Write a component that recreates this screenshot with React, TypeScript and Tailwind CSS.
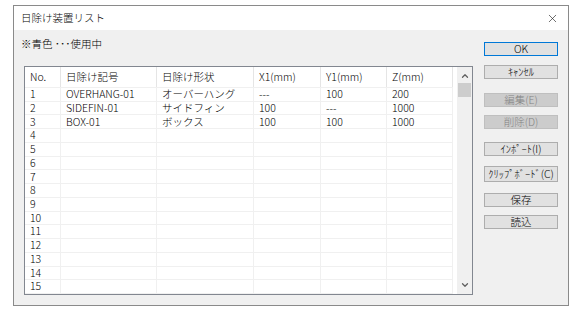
import { X, ChevronUp, ChevronDown } from 'lucide-react'

const cols = [
  { key: 'no', label: 'No.', w: 'w-[36px]' },
  { key: 'code', label: '日除け記号', w: 'w-[96px]' },
  { key: 'shape', label: '日除け形状', w: 'w-[97px]' },
  { key: 'x1', label: 'X1(mm)', w: 'w-[67px]' },
  { key: 'y1', label: 'Y1(mm)', w: 'w-[66px]' },
  { key: 'z', label: 'Z(mm)', w: 'w-[66px]' },
]

const data: Record<number, string[]> = {
  1: ['OVERHANG-01', 'オーバーハング', '---', '100', '200'],
  2: ['SIDEFIN-01', 'サイドフィン', '100', '---', '1000'],
  3: ['BOX-01', 'ボックス', '100', '100', '1000'],
}

function Btn({ label, disabled, primary, className = '' }: { label: string; disabled?: boolean; primary?: boolean; className?: string }) {
  return (
    <div
      className={`w-[74px] h-[14px] flex items-center justify-center text-[10.5px] leading-none whitespace-nowrap font-light border ${
        disabled
          ? 'bg-[#cccccc] border-[#bfbfbf] text-[#838383]'
          : primary
          ? 'bg-[#e1e1e1] border-[#0078d7] text-black'
          : 'bg-[#e1e1e1] border-[#adadad] text-black'
      } ${className}`}
    >
      {label}
    </div>
  )
}

export default function App() {
  const rows = Array.from({ length: 15 }, (_, i) => i + 1)

  return (
    <div className="w-[582px] h-[316px] bg-white pt-[5px] pl-[13px] font-light" style={{ fontFamily: '"Noto Sans CJK JP", "Noto Sans", sans-serif' }}>
      <div className="w-[556px] h-[301px] border border-[#8a8a8a] flex flex-col">
        {/* title bar */}
        <div className="h-[24px] bg-white flex items-center justify-between pl-[7px] pr-[9px] shrink-0">
          <span className="text-[10.5px] text-black">日除け装置リスト</span>
          <X className="w-[13px] h-[13px] text-[#222]" strokeWidth={1.2} />
        </div>

        {/* body */}
        <div className="flex-1 bg-[#f0f0f0] flex">
          <div className="flex flex-col">
            <div className="h-[14px] mt-[7px] pl-[7px] text-[10.5px] leading-[14px] text-black">※青色 ･･･使用中</div>
            <div className="ml-[10px] mt-[15px] w-[449px] h-[229px] border border-[#828790] bg-white flex overflow-hidden">
              <div className="flex flex-col w-[428px]">
                <div className="flex h-[21px] shrink-0 border-b border-[#f0f0f0]">
                  {cols.map((c) => (
                    <div key={c.key} className={`${c.w} border-r border-[#e5e5e5] pl-[5px] flex items-center text-[10.5px] text-black`}>
                      {c.label}
                    </div>
                  ))}
                </div>
                <div className="grid grid-rows-[repeat(15,minmax(0,1fr))] h-[206px]">
                  {rows.map((r) => {
                    const d = data[r] ?? ['', '', '', '', '']
                    const cells = [String(r), ...d]
                    return (
                      <div key={r} className="flex border-b border-[#f0f0f0]">
                        {cols.map((c, i) => (
                          <div key={c.key} className={`${c.w} border-r border-[#f0f0f0] pl-[5px] flex items-center text-[10.5px] leading-none text-black whitespace-nowrap`}>
                            {cells[i]}
                          </div>
                        ))}
                      </div>
                    )
                  })}
                </div>
              </div>
              <div className="w-[4px]" />
              <div className="w-[15px] bg-[#f0f0f0] flex flex-col items-center">
                <ChevronUp className="w-[10px] h-[10px] mt-[4px] text-[#606060]" strokeWidth={3} />
                <div className="w-[13px] h-[14px] mt-[2px] bg-[#cdcdcd]" />
                <div className="flex-1" />
                <ChevronDown className="w-[10px] h-[10px] mb-[4px] text-[#606060]" strokeWidth={3} />
              </div>
            </div>
          </div>

          <div className="flex flex-col ml-[11px]">
            <Btn label="OK" primary className="mt-[12px]" />
            <Btn label="ｷｬﾝｾﾙ" className="mt-[9px]" />
            <Btn label="編集(E)" disabled className="mt-[14px]" />
            <Btn label="削除(D)" disabled className="mt-[8px]" />
            <Btn label="ｲﾝﾎﾟｰﾄ(I)" className="mt-[13px]" />
            <Btn label="ｸﾘｯﾌﾟﾎﾞｰﾄﾞ(C)" className="mt-[10px] h-[16px]" />
            <Btn label="保存" className="mt-[11px]" />
            <Btn label="読込" className="mt-[8px]" />
          </div>
        </div>
      </div>
    </div>
  )
}
